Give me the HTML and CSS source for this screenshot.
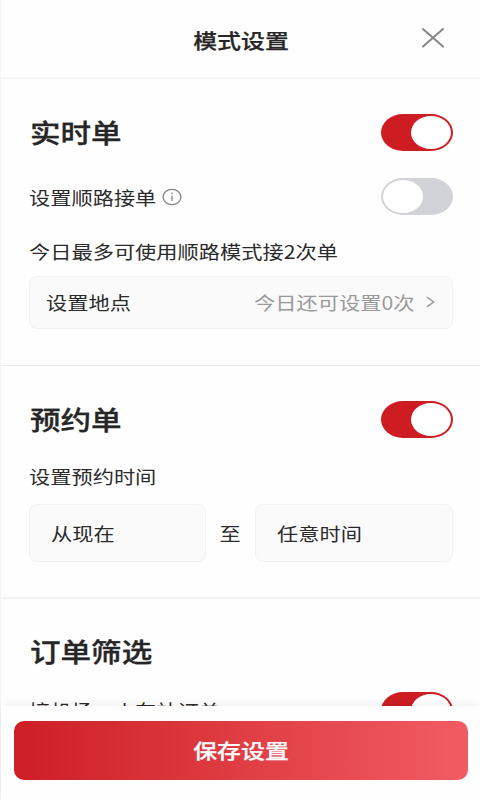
FILE: index.html
```html
<!DOCTYPE html>
<html lang="zh-CN">
<head>
<meta charset="utf-8">
<title>模式设置</title>
<link rel="stylesheet" href="styles.css">
</head>
<body>
<div class="page">
  <header class="header">
    <h1 class="title"><span class="wide center">模式设置</span></h1>
    <svg class="close" width="24" height="22" viewBox="0 0 24 22"><path d="M2 2 L22 19.6 M22 2 L2 19.6"/></svg>
  </header>
  <main>
    <section class="section realtime">
      <div class="row">
        <h2 class="heading"><span class="wide">实时单</span></h2>
        <div class="toggle on"><i class="knob"></i></div>
      </div>
      <div class="row second">
        <div class="label info-label"><span class="wide">设置顺路接单</span>
          <svg class="info" width="20" height="18" viewBox="0 0 20 18"><ellipse cx="10" cy="9" rx="8.9" ry="7.7"/><path d="M10 7.8V13 M10 4.6V6.2"/></svg>
        </div>
        <div class="toggle"><i class="knob"></i></div>
      </div>
      <p class="label note"><span class="wide">今日最多可使用顺路模式接2次单</span></p>
      <div class="field place">
        <span class="wide">设置地点</span>
        <span class="remain"><span class="wide right">今日还可设置0次</span>
          <svg class="chevron" width="9" height="12" viewBox="0 0 9 12"><path d="M1 1.2 L7.6 6 L1 10.8"/></svg>
        </span>
      </div>
    </section>
    <section class="section booking">
      <div class="row">
        <h2 class="heading"><span class="wide">预约单</span></h2>
        <div class="toggle on"><i class="knob"></i></div>
      </div>
      <p class="label time-label"><span class="wide">设置预约时间</span></p>
      <div class="times">
        <div class="field time"><span class="wide">从现在</span></div>
        <span class="to"><span class="wide center">至</span></span>
        <div class="field time"><span class="wide">任意时间</span></div>
      </div>
    </section>
    <section class="section filter">
      <h2 class="heading"><span class="wide">订单筛选</span></h2>
      <div class="row filter-row">
        <div class="label"><span class="wide">接机场、火车站订单</span></div>
        <div class="toggle on"><i class="knob"></i></div>
      </div>
    </section>
  </main>
  <footer class="footer">
    <button class="save"><span class="wide center">保存设置</span></button>
  </footer>
</div>
</body>
</html>
```
FILE: styles.css
```css
* { box-sizing: border-box; margin: 0; padding: 0; }
body {
  width: 480px;
  height: 800px;
  overflow: hidden;
  background: #fefefe;
  color: #2b2b2b;
  font: 18.2px/24px "Noto Sans CJK SC", sans-serif;
}
.page {
  height: 800px;
  display: flex;
  flex-direction: column;
  border-left: 1px solid #f3f3f3;
}
.wide {
  display: inline-block;
  white-space: nowrap;
  transform: scaleX(1.167);
  transform-origin: left center;
}
.center { transform-origin: center; }
.right { transform-origin: right center; }
svg { fill: none; display: block; }
.header {
  flex: none;
  height: 79px;
  padding: 3px 35px 0 0;
  border-bottom: 2px solid #f5f5f5;
  display: grid;
  grid-template-columns: 60px 1fr 24px;
  align-items: center;
}
.title {
  grid-column: 2;
  text-align: center;
  font-size: 20.5px;
  line-height: 30px;
  font-weight: 500;
  color: #262626;
  -webkit-text-stroke: .25px;
}
.close { stroke: #878787; stroke-width: 2; stroke-linecap: round; margin-top: -5px; }
main { flex: 1; min-height: 0; overflow: hidden; }
.section { padding: 0 27px 0 28px; border-bottom: 2px solid #f3f3f3; }
.row { display: flex; align-items: center; justify-content: space-between; height: 38px; }
.heading {
  padding-left: .5px;
  font-size: 26.2px;
  line-height: 36px;
  font-weight: 500;
  color: #262626;
  -webkit-text-stroke: .3px;
}
.toggle {
  width: 72px;
  height: 37px;
  padding: 2px;
  border-radius: 22px / 18.5px;
  background: #d2d3d9;
  display: flex;
}
.knob { width: 40px; height: 33px; border-radius: 50%; background: #fff; }
.toggle.on { background: #cd1d23; justify-content: flex-end; }
.realtime { height: 287px; padding-top: 34px; border-bottom: 1px solid #ebebeb; }
.second { margin-top: 26px; }
.info-label { display: flex; align-items: center; gap: 24px; padding-top: 1px; }
.info { stroke: #858585; stroke-width: 1.3; }
.note { margin-top: 24px; }
.field {
  background: #fafafa;
  border: 1px solid #f2f2f2;
  border-radius: 8px;
  display: flex;
  align-items: center;
}
.place { height: 53px; margin-top: 13px; padding: 0 17px 2px 16px; justify-content: space-between; }
.remain { display: flex; align-items: center; gap: 12px; color: #999; }
.chevron { stroke: #999; stroke-width: 1.5; }
.booking { height: 233px; padding-top: 34px; }
.time-label { margin-top: 26px; }
.times { display: grid; grid-template-columns: 177px 48.5px 1fr; margin-top: 16px; align-items: center; }
.time { height: 58px; padding: 0 0 1px 21px; }
.to { text-align: center; }
.filter { padding-top: 34px; border: 0; }
.filter-row { margin-top: 22px; }
.footer {
  position: relative;
  flex: none;
  height: 94px;
  padding: 15px 12px 0 13px;
  background: #fefefe;
  box-shadow: 0 -2px 8px rgba(0, 0, 0, .06);
}
.save {
  display: block;
  width: 454px;
  height: 59px;
  padding-bottom: 2px;
  border: 0;
  border-radius: 10px;
  background: linear-gradient(90deg, #cd1f25, #f15c62);
  color: #fff;
  font: 500 20.5px/30px "Noto Sans CJK SC", sans-serif;
  -webkit-text-stroke: .25px;
}
```
